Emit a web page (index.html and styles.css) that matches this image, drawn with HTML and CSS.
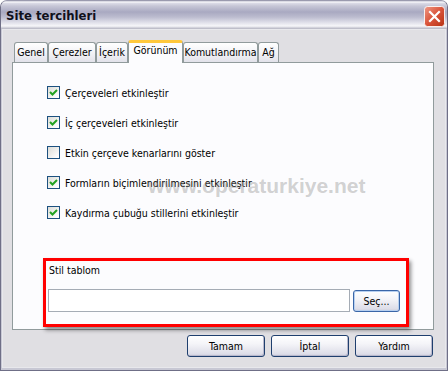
FILE: index.html
```html
<!DOCTYPE html>
<html lang="tr">
<head>
<meta charset="utf-8">
<title>Site tercihleri</title>
<link rel="stylesheet" href="styles.css">
</head>
<body>
<div class="window">
  <div class="titlebar">
    <span class="title">Site tercihleri</span>
    <span class="close">
      <svg width="21" height="21" viewBox="0 0 21 21">
        <defs>
          <linearGradient id="cg" x1="0" y1="0" x2="1" y2="1">
            <stop offset="0" stop-color="#f09a86"/>
            <stop offset="0.5" stop-color="#d9533a"/>
            <stop offset="1" stop-color="#b63214"/>
          </linearGradient>
        </defs>
        <rect x="0.5" y="0.5" width="20" height="20" rx="3" fill="url(#cg)" stroke="#ffffff" stroke-opacity="0.85"/>
        <path d="M6 6 L15 15 M15 6 L6 15" stroke="#ffffff" stroke-width="2.2" stroke-linecap="square"/>
      </svg>
    </span>
  </div>
  <div class="content">
    <div class="tabs">
      <div class="tab t-genel">Genel</div>
      <div class="tab t-cerez">Çerezler</div>
      <div class="tab t-icerik">İçerik</div>
      <div class="tab t-gorunum active">Görünüm</div>
      <div class="tab t-komut">Komutlandırma</div>
      <div class="tab t-ag">Ağ</div>
    </div>
    <div class="panel">
      <div class="options">
        <label class="opt"><span class="cb on"><svg width="11" height="11" viewBox="0 0 11 11"><path d="M2 5 L4.5 7.5 L9 3" fill="none" stroke="#21a121" stroke-width="2"/></svg></span>Çerçeveleri etkinleştir</label>
        <label class="opt"><span class="cb on"><svg width="11" height="11" viewBox="0 0 11 11"><path d="M2 5 L4.5 7.5 L9 3" fill="none" stroke="#21a121" stroke-width="2"/></svg></span>İç çerçeveleri etkinleştir</label>
        <label class="opt"><span class="cb"></span>Etkin çerçeve kenarlarını göster</label>
        <label class="opt"><span class="cb on"><svg width="11" height="11" viewBox="0 0 11 11"><path d="M2 5 L4.5 7.5 L9 3" fill="none" stroke="#21a121" stroke-width="2"/></svg></span>Formların biçimlendirilmesini etkinleştir</label>
        <label class="opt"><span class="cb on"><svg width="11" height="11" viewBox="0 0 11 11"><path d="M2 5 L4.5 7.5 L9 3" fill="none" stroke="#21a121" stroke-width="2"/></svg></span>Kaydırma çubuğu stillerini etkinleştir</label>
      </div>
      <div class="group">
        <div class="glabel">Stil tablom</div>
        <div class="grow">
          <div class="input"></div>
          <div class="btn small">Seç...</div>
        </div>
      </div>
      <div class="watermark">www.operaturkiye.net</div>
    </div>
    <div class="buttons">
      <div class="btn">Tamam</div>
      <div class="btn">İptal</div>
      <div class="btn">Yardım</div>
    </div>
  </div>
</div>
</body>
</html>
```
FILE: styles.css
```css
html, body {
  margin: 0;
  padding: 0;
  background: #ffffff;
}
body {
  width: 448px;
  height: 371px;
  overflow: hidden;
  font-family: "DejaVu Sans Condensed", "DejaVu Sans", sans-serif;
  font-stretch: condensed;
  font-size: 10.5px;
  color: #000;
}
.window {
  width: 448px;
  height: 371px;
  box-sizing: border-box;
  display: flex;
  flex-direction: column;
  border-radius: 7px 7px 0 0;
  overflow: hidden;
  background: #e0dfe3;
  border: 1px solid #6f6f87;
  border-top-color: #9a9aae;
}
.titlebar {
  height: 28px;
  flex: none;
  display: flex;
  align-items: center;
  justify-content: space-between;
  padding: 0 2px 0 5px;
  background: linear-gradient(to bottom,
    #b7b7c9 0px, #ffffff 1px, #dddde8 2px, #c6c6d6 5px,
    #a9a9c1 11px, #bcbccf 16px, #e3e3ec 22px, #f6f6f9 25px, #c7c7d2 27px, #b5b5c2 28px);
}
.title {
  font-weight: bold;
  font-size: 13px;
  color: #10101c;
  margin-top: 1px;
}
.close {
  display: flex;
  margin-top: 3px;
}
.content {
  flex: 1;
  display: flex;
  flex-direction: column;
  padding: 11px 12px 0 10px;
  border-left: 1px solid #c8c8d4;
  border-right: 1px solid #c8c8d4;
  border-bottom: 2px solid #c8c8d4;
  box-shadow: inset 0 0 0 1px #e8e8ec;
}
.tabs {
  display: flex;
  align-items: flex-end;
  height: 22px;
  padding-left: 2px;
  position: relative;
  z-index: 1;
}
.tab {
  height: 20px;
  box-sizing: border-box;
  padding: 0;
  border: 1px solid #919b9c;
  border-bottom: none;
  border-radius: 3px 3px 0 0;
  background: linear-gradient(to bottom, #ffffff, #f0f0f4 60%, #e2e2ea);
  line-height: 19px;
  white-space: nowrap;
  display: flex;
  justify-content: center;
}
.t-genel { width: 34px; }
.t-cerez { width: 48px; }
.t-icerik { width: 32px; }
.t-gorunum { width: 55px; }
.t-komut { width: 75px; }
.t-ag { width: 21px; }
.tab.active {
  height: 23px;
  margin-bottom: -1px;
  border-top: 3px solid #ffc83c;
  background: #fcfcfe;
  line-height: 15px;
}
.panel {
  position: relative;
  height: 268px;
  box-sizing: border-box;
  border: 1px solid #919b9c;
  background: #fcfcfe;
  display: flex;
  flex-direction: column;
}
.options {
  display: flex;
  flex-direction: column;
  gap: 17px;
  padding: 23px 0 0 34px;
}
.opt {
  display: flex;
  align-items: center;
  height: 13px;
  gap: 5px;
  white-space: nowrap;
  position: relative;
  z-index: 2;
}
.cb {
  width: 13px;
  height: 13px;
  box-sizing: border-box;
  border: 1px solid #1c5180;
  background: linear-gradient(135deg, #dcdcd7, #ffffff 90%);
  display: flex;
  align-items: center;
  justify-content: center;
  flex: none;
}
.group {
  margin: 39px 24px 0 30px;
  border: 3px solid #ff0000;
  box-shadow: 2px 3px 4px rgba(0, 0, 0, 0.45);
  padding: 3px 5px 12px 2px;
  position: relative;
  z-index: 2;
}
.glabel {
  line-height: 13px;
  padding-left: 1px;
}
.grow {
  display: flex;
  align-items: center;
  gap: 3px;
  margin-top: 12px;
}
.input {
  width: 302px;
  height: 23px;
  box-sizing: border-box;
  border: 1px solid #a5acb5;
  background: #ffffff;
}
.btn {
  width: 78px;
  height: 22px;
  box-sizing: border-box;
  border: 1px solid #1f3f6e;
  border-radius: 3px;
  background: linear-gradient(to bottom, #ffffff 0%, #f4f4f8 40%, #dddde8 90%, #c9c9d9 100%);
  display: flex;
  align-items: center;
  justify-content: center;
  box-shadow: inset -1px -1px 0 #b8b8cc;
}
.btn.small {
  width: 47px;
  height: 22px;
  border-color: #3a66a8;
  box-shadow: inset 0 0 0 1px #b8d0f0;
}
.buttons {
  display: flex;
  justify-content: flex-end;
  gap: 6px;
  padding: 5px 1px 0 0;
}
.watermark {
  position: absolute;
  left: 135px;
  top: 112px;
  font-family: "Liberation Sans", sans-serif;
  font-stretch: normal;
  font-weight: bold;
  font-size: 21px;
  line-height: 21px;
  color: rgba(140, 140, 140, 0.4);
  z-index: 3;
  white-space: nowrap;
}
```
